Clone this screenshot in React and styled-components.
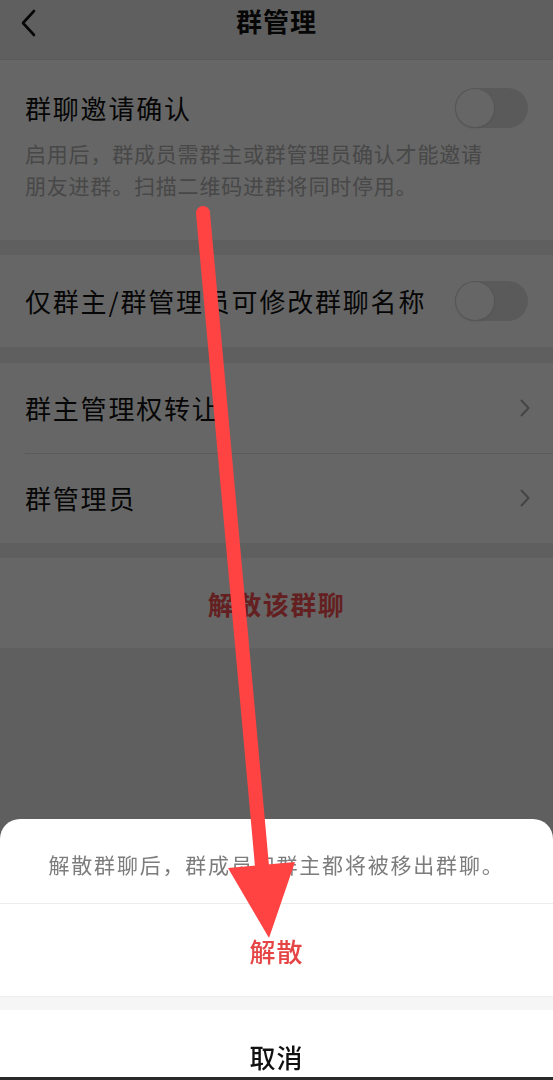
import React from "react";
import styled, { createGlobalStyle } from "styled-components";

const GlobalStyle = createGlobalStyle`
  html, body {
    margin: 0;
    padding: 0;
    height: 1080px;
    overflow: hidden;
    background: #ededed;
  }
  * { box-sizing: border-box; }
  body {
    font-family: "Noto Sans CJK SC", "Noto Sans", sans-serif;
  }
`;

const rows = [
  { label: "群主管理权转让" },
  { label: "群管理员" },
];

function App() {
  return (
    <>
      <GlobalStyle />
      <StyledPage>
        <Header>
          <BackButton>
            <svg width="18" height="30" viewBox="0 0 18 30">
              <path d="M15 3 L4 15 L15 27" fill="none" stroke="#111" strokeWidth="2.6" strokeLinecap="round" strokeLinejoin="round" />
            </svg>
          </BackButton>
          <Title>群管理</Title>
        </Header>

        <Section>
          <InviteBlock>
            <RowLine>
              <Label>群聊邀请确认</Label>
              <Toggle />
            </RowLine>
            <Desc>启用后，群成员需群主或群管理员确认才能邀请朋友进群。扫描二维码进群将同时停用。</Desc>
          </InviteBlock>
        </Section>

        <Section $gap="15px">
          <Row $height="92px">
            <Label>仅群主/群管理员可修改群聊名称</Label>
            <Toggle />
          </Row>
        </Section>

        <Section $gap="16px">
          {rows.map((r, i) => (
            <Row key={r.label} $divider={i > 0}>
              <Label>{r.label}</Label>
              <Chevron>
                <svg width="12" height="20" viewBox="0 0 12 20">
                  <path d="M2.5 2.5 L9.5 10 L2.5 17.5" fill="none" stroke="#aaa" strokeWidth="2" strokeLinecap="round" strokeLinejoin="round" />
                </svg>
              </Chevron>
            </Row>
          ))}
        </Section>

        <Section $gap="15px">
          <DangerRow>解散该群聊</DangerRow>
        </Section>
      </StyledPage>

      <Mask />

      <Sheet>
        <SheetMessage>解散群聊后，群成员和群主都将被移出群聊。</SheetMessage>
        <SheetAction $danger>解散</SheetAction>
        <SheetSpacer />
        <CancelAction>取消</CancelAction>
        <BottomEdge />
      </Sheet>

      <Annotation width="553" height="1080" viewBox="0 0 553 1080">
        <path d="M203 213 L262 866" stroke="#ff4343" strokeWidth="14" strokeLinecap="round" fill="none" />
        <polygon points="228,868 295,862 269,938" fill="#ff4343" />
      </Annotation>
    </>
  );
}

const StyledPage = styled.div`
  display: flex;
  flex-direction: column;
  width: 553px;
  height: 1080px;
  background: #ededed;
`;

const Header = styled.div`
  position: relative;
  height: 60px;
  display: flex;
  align-items: center;
  justify-content: center;
  background: #ededed;
  border-bottom: 1px solid #e2e2e2;
`;

const BackButton = styled.div`
  position: absolute;
  left: 19px;
  top: 7px;
  width: 24px;
  height: 32px;
  display: flex;
  align-items: center;
`;

const Title = styled.div`
  font-size: 26px;
  font-weight: 700;
  color: #111;
  margin-top: -18px;
  letter-spacing: 1px;
`;

const Section = styled.div`
  background: #fff;
  margin-top: ${(p) => p.$gap || "0"};
`;

const InviteBlock = styled.div`
  padding: 27px 25px 37px 25px;
  height: 180px;
`;

const RowLine = styled.div`
  display: flex;
  align-items: center;
  justify-content: space-between;
  height: 41px;
`;

const Row = styled.div`
  position: relative;
  display: flex;
  align-items: center;
  justify-content: space-between;
  height: ${(p) => p.$height || "90px"};
  padding: 0 25px;
  &::before {
    content: "";
    display: ${(p) => (p.$divider ? "block" : "none")};
    position: absolute;
    left: 25px;
    right: 0;
    top: 0;
    border-top: 1px solid #e3e3e3;
  }
`;

const Label = styled.div`
  font-size: 26px;
  color: #111;
  letter-spacing: 1.8px;
  line-height: 40px;
`;

const Desc = styled.div`
  font-size: 21px;
  letter-spacing: 0.8px;
  line-height: 32px;
  color: #b3b3b3;
  margin-top: 9px;
  padding-right: 40px;
`;

const Toggle = styled.div`
  position: relative;
  width: 73px;
  height: 40px;
  border-radius: 20px;
  background: #e2e2e2;
  flex-shrink: 0;
  &::after {
    content: "";
    position: absolute;
    left: 1px;
    top: 1px;
    width: 38px;
    height: 38px;
    border-radius: 50%;
    background: #fff;
    box-shadow: 0 0 0 1px #d8d8d8, 0 1px 3px rgba(0, 0, 0, 0.15);
  }
`;

const Chevron = styled.div`
  display: flex;
  align-items: center;
  margin-right: -3px;
`;

const DangerRow = styled.div`
  height: 90px;
  display: flex;
  align-items: center;
  justify-content: center;
  font-size: 26px;
  font-weight: 700;
  letter-spacing: 1.5px;
  color: #fa5151;
`;

const Mask = styled.div`
  position: fixed;
  inset: 0;
  background: rgba(0, 0, 0, 0.6);
`;

const Sheet = styled.div`
  position: fixed;
  left: 0;
  right: 0;
  bottom: 0;
  height: 261px;
  background: #fff;
  border-radius: 20px 20px 0 0;
  display: flex;
  flex-direction: column;
  overflow: hidden;
`;

const SheetMessage = styled.div`
  height: 85px;
  display: flex;
  align-items: center;
  justify-content: center;
  font-size: 21px;
  letter-spacing: 1.8px;
  color: #7c7c7c;
  border-bottom: 1px solid #ececec;
  padding-top: 6px;
`;

const SheetAction = styled.div`
  height: 92px;
  display: flex;
  align-items: center;
  justify-content: center;
  font-size: 26px;
  font-weight: 500;
  letter-spacing: 1px;
  color: ${(p) => (p.$danger ? "#e64545" : "#111")};
`;

const SheetSpacer = styled.div`
  height: 14px;
  background: #f6f6f6;
  border-top: 1px solid #eeeeee;
`;

const CancelAction = styled.div`
  flex: 1;
  display: flex;
  justify-content: center;
  align-items: flex-start;
  padding-top: 32px;
  font-size: 26px;
  font-weight: 500;
  letter-spacing: 1px;
  color: #111;
  line-height: 30px;
`;

const BottomEdge = styled.div`
  height: 3px;
  background: #2a2a2a;
`;

const Annotation = styled.svg`
  position: fixed;
  left: 0;
  top: 0;
  pointer-events: none;
`;

export default App;
